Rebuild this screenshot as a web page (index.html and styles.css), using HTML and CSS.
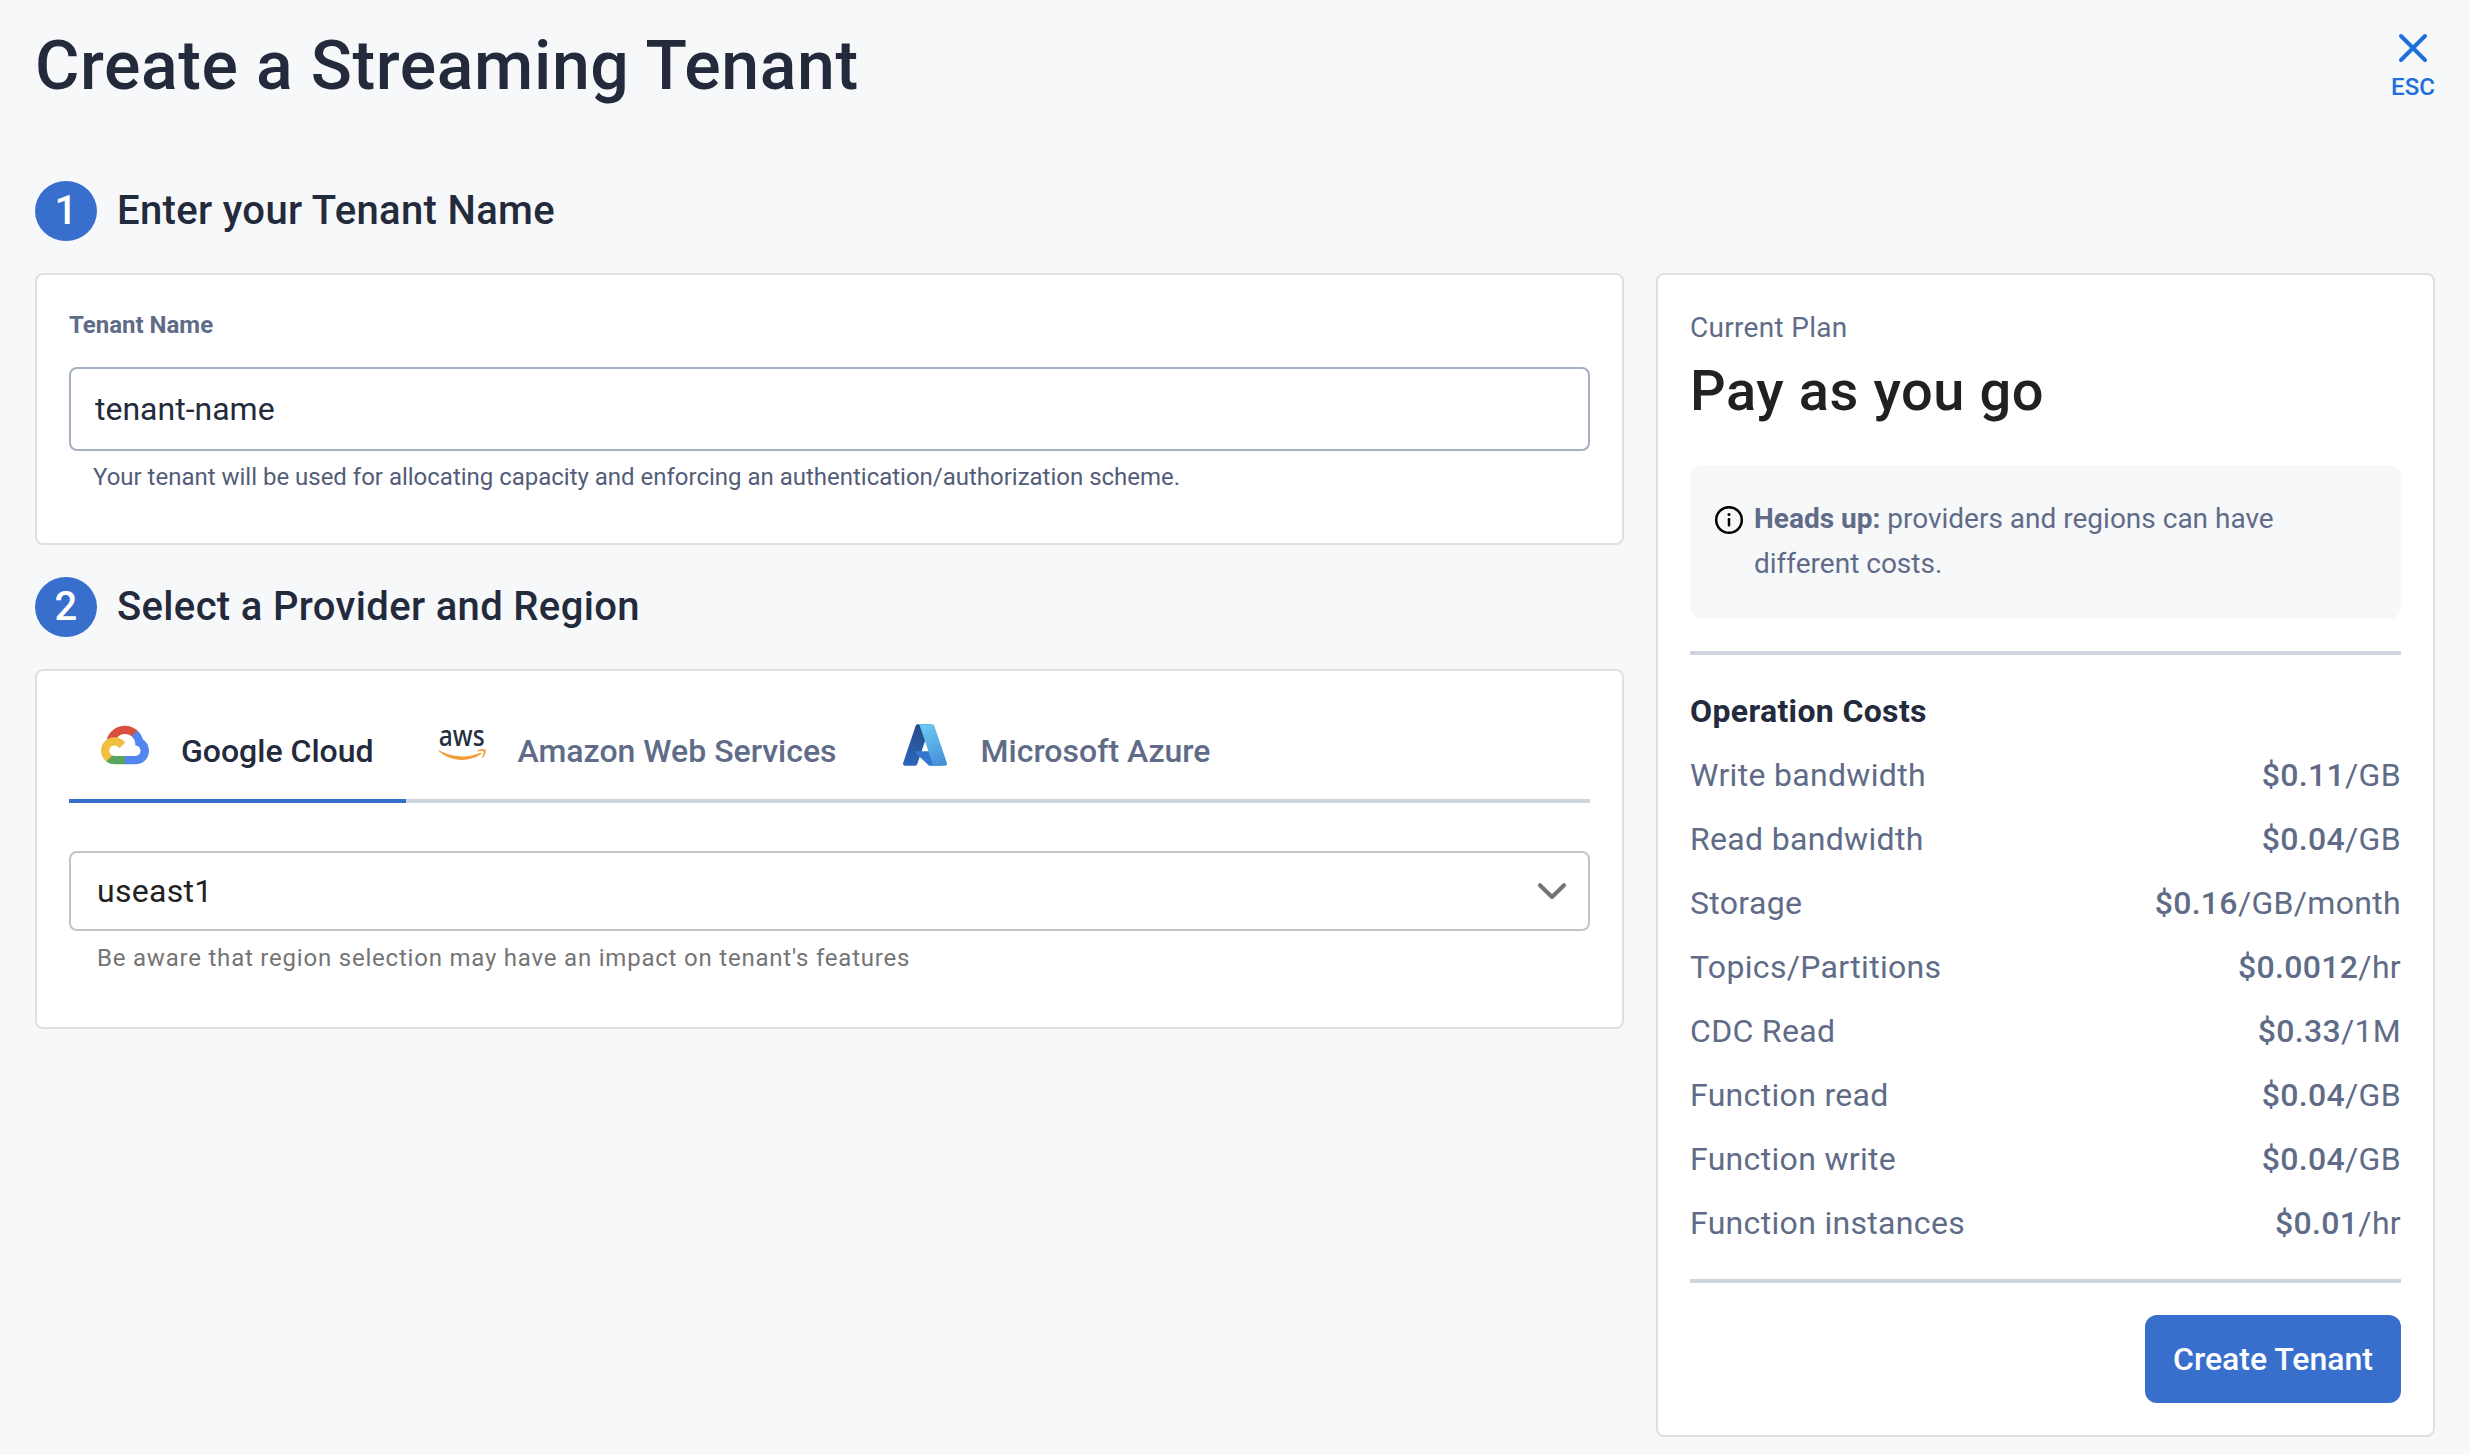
FILE: index.html
```html
<!DOCTYPE html>
<html lang="en">
<head>
<meta charset="utf-8">
<title>Create a Streaming Tenant</title>
<link rel="stylesheet" href="styles.css">
</head>
<body>
<header class="header">
  <h1 class="title">Create a Streaming Tenant</h1>
  <button class="close" type="button">
    <svg width="48" height="48" viewBox="0 0 48 48" fill="none" stroke="currentColor" stroke-width="4" stroke-linecap="round"><path d="M12 12 36 36M36 12 12 36"/></svg>
    <span>ESC</span>
  </button>
</header>

<main class="layout">
  <div class="form">
    <h2 class="step"><span class="badge">1</span>Enter your Tenant Name</h2>
    <section class="card name-card">
      <label class="label" for="tenant">Tenant Name</label>
      <input class="input" id="tenant" type="text" value="tenant-name">
      <p class="help">Your tenant will be used for allocating capacity and enforcing an authentication/authorization scheme.</p>
    </section>

    <h2 class="step"><span class="badge">2</span>Select a Provider and Region</h2>
    <section class="card region-card">
      <nav class="tabs">
        <a class="tab active">
          <svg class="logo" viewBox="0 -25 256 256">
            <path fill="#d94f3d" d="M170.2517 56.8186 192.5047 34.5656 193.9877 25.1956C153.4367-11.6774 88.9757-7.4964 52.4207 33.9196 42.2667 45.4226 34.7337 59.7636 30.7167 74.5726L38.6867 73.4496 83.1917 66.1106 86.6277 62.5966C106.4247 40.8546 139.8977 37.9296 162.7557 56.4286Z"/>
            <path fill="#5286ee" d="M224.2048 73.9182C219.0898 55.0822 208.5888 38.1492 193.9878 25.1962L162.7558 56.4282C175.9438 67.2042 183.4568 83.4382 183.1348 100.4652L183.1348 106.0092C198.4858 106.0092 210.9318 118.4542 210.9318 133.8052 210.9318 149.1572 198.4858 161.2902 183.1348 161.2902L127.4638 161.2902 121.9978 167.2242 121.9978 200.5642 127.4638 205.7952 183.1348 205.7952C223.0648 206.1062 255.6868 174.3012 255.9978 134.3712 256.1858 110.1682 244.2528 87.4782 224.2048 73.9182"/>
            <path fill="#58a55c" d="M71.8704 205.7957 127.4634 205.7957 127.4634 161.2897 71.8704 161.2897C67.9094 161.2887 64.0734 160.4377 60.4714 158.7917L52.5844 161.2117 30.1754 183.4647 28.2234 191.0387C40.7904 200.5277 56.1234 205.8637 71.8704 205.7957"/>
            <path fill="#f2be42" d="M71.8704 61.4255C31.9394 61.6635-.2366 94.2275.0014 134.1575.1344 156.4555 10.5484 177.4455 28.2234 191.0385L60.4714 158.7915C46.4804 152.4705 40.2634 136.0055 46.5844 122.0155 52.9044 108.0255 69.3704 101.8085 83.3594 108.1285 89.5244 110.9135 94.4614 115.8515 97.2464 122.0155L129.4944 89.7685C115.7734 71.8315 94.4534 61.3445 71.8704 61.4255"/>
          </svg>
          Google Cloud
        </a>
        <a class="tab">
          <svg class="logo" viewBox="0 0 48 48">
            <text class="aws-word" x="0.8" y="24.8" textLength="45.8" lengthAdjust="spacingAndGlyphs">aws</text>
            <g fill="#f29d38" transform="translate(.2 10.4) scale(.1575)">
              <path d="M273.5 143.7c-32.9 24.3-80.7 37.2-121.8 37.2-57.6 0-109.5-21.3-148.7-56.7-3.1-2.8-.3-6.6 3.4-4.4 42.4 24.6 94.7 39.5 148.8 39.5 36.5 0 76.6-7.6 113.5-23.2 5.5-2.5 10.2 3.6 4.8 7.6z"/>
              <path d="M287.2 128.1c-4.2-5.4-27.8-2.6-38.5-1.3-3.2.4-3.7-2.4-.8-4.5 18.8-13.2 49.7-9.4 53.3-5 3.6 4.5-1 35.4-18.6 50.2-2.7 2.3-5.3 1.1-4.1-1.9 4-9.9 12.9-32.2 8.7-37.5z"/>
            </g>
          </svg>
          Amazon Web Services
        </a>
        <a class="tab">
          <svg class="logo" viewBox="0 0 96 96">
            <defs>
              <linearGradient id="az-left" x1="45" y1="12" x2="18" y2="92" gradientUnits="userSpaceOnUse"><stop stop-color="#254a88"/><stop offset="1" stop-color="#2c68bb"/></linearGradient>
              <linearGradient id="az-right" x1="46" y1="10" x2="76" y2="89" gradientUnits="userSpaceOnUse"><stop stop-color="#6ac8f1"/><stop offset="1" stop-color="#4690d8"/></linearGradient>
            </defs>
            <path fill="url(#az-left)" d="M33.338 6.544h26.038l-27.03 80.087a4.152 4.152 0 0 1-3.933 2.824H8.149a4.145 4.145 0 0 1-3.928-5.47L29.404 9.368a4.152 4.152 0 0 1 3.934-2.825z"/>
            <path fill="#3375d0" d="M71.175 60.261h-41.29a1.911 1.911 0 0 0-1.305 3.309l26.532 24.764a4.171 4.171 0 0 0 2.846 1.121h23.38z"/>
            <path fill="url(#az-right)" d="M66.595 9.364a4.145 4.145 0 0 0-3.928-2.82H33.648a4.146 4.146 0 0 1 3.928 2.82l25.184 74.62a4.146 4.146 0 0 1-3.928 5.472h29.02a4.146 4.146 0 0 0 3.927-5.472z"/>
          </svg>
          Microsoft Azure
        </a>
      </nav>
      <div class="select">
        <span>useast1</span>
        <svg width="32" height="20" viewBox="0 0 32 20" fill="none" stroke="#757575" stroke-width="4.2" stroke-linecap="round" stroke-linejoin="round"><path d="M4 4.3 16 15.9 28 4.3"/></svg>
      </div>
      <p class="help region-help">Be aware that region selection may have an impact on tenant's features</p>
    </section>
  </div>

  <aside class="card plan">
    <p class="plan-label">Current Plan</p>
    <h2 class="plan-name">Pay as you go</h2>
    <div class="notice">
      <svg class="info" width="30" height="30" viewBox="0 0 30 30"><circle cx="15" cy="15" r="12.8" fill="none" stroke="#000" stroke-width="2.5"/><path d="M15 14.2v6" stroke="#000" stroke-width="2.5" stroke-linecap="round"/><circle cx="15" cy="9.6" r="1.5"/></svg>
      <p><b>Heads up:</b> providers and regions can have different costs.</p>
    </div>
    <hr class="rule">
    <h3 class="costs-title">Operation Costs</h3>
    <dl class="costs">
      <div><dt>Write bandwidth</dt><dd><b>$0.11</b>/GB</dd></div>
      <div><dt>Read bandwidth</dt><dd><b>$0.04</b>/GB</dd></div>
      <div><dt>Storage</dt><dd><b>$0.16</b>/GB/month</dd></div>
      <div><dt>Topics/Partitions</dt><dd><b>$0.0012</b>/hr</dd></div>
      <div><dt>CDC Read</dt><dd><b>$0.33</b>/1M</dd></div>
      <div><dt>Function read</dt><dd><b>$0.04</b>/GB</dd></div>
      <div><dt>Function write</dt><dd><b>$0.04</b>/GB</dd></div>
      <div><dt>Function instances</dt><dd><b>$0.01</b>/hr</dd></div>
    </dl>
    <hr class="rule">
    <button class="submit" type="button">Create Tenant</button>
  </aside>
</main>
</body>
</html>
```
FILE: styles.css
```css
* {
  box-sizing: border-box;
  margin: 0;
}

body {
  padding: 0 35px;
  background: #f7f8fa;
  color: #232a3b;
  font-family: Roboto, "Liberation Sans", sans-serif;
  font-size: 32px;
}

button {
  border: 0;
  font-family: inherit;
}

.header {
  display: flex;
  justify-content: space-between;
  height: 181px;
}

.title {
  padding-top: 26px;
  font-size: 68px;
  font-weight: 500;
  line-height: 80px;
  letter-spacing: 0.6px;
}

.close {
  display: flex;
  flex-direction: column;
  align-items: center;
  margin-right: -2px;
  padding: 24px 0 0;
  background: none;
  color: #1d6fdb;
  font-size: 24px;
  font-weight: 500;
  line-height: 30px;
}

.layout {
  display: grid;
  grid-template-columns: 1589px 779px;
  gap: 32px;
  align-items: start;
}

.step {
  display: flex;
  gap: 20px;
  height: 60px;
  margin-bottom: 32px;
  font-size: 40px;
  font-weight: 500;
  line-height: 60px;
  letter-spacing: 0.34px;
}

.badge {
  width: 62px;
  border-radius: 50%;
  background: #386fcd;
  color: #fff;
  text-align: center;
}

.card {
  border: 2px solid #dfe0e2;
  border-radius: 8px;
  background: #fff;
  padding: 32px;
}

.name-card {
  height: 272px;
  margin-bottom: 32px;
}

.region-card {
  height: 360px;
}

.label {
  display: block;
  margin-bottom: 24px;
  color: #606c87;
  font-size: 24px;
  font-weight: 700;
  line-height: 36px;
}

.input {
  display: block;
  width: 100%;
  height: 84px;
  padding: 0 24px;
  border: 2px solid #a5b0c1;
  border-radius: 8px;
  background: #fff;
  color: #232a3b;
  font: 400 32px Roboto, "Liberation Sans", sans-serif;
}

.help {
  padding: 6px 24px 0;
  color: #535d79;
  font-size: 24px;
  line-height: 40px;
  letter-spacing: -0.01px;
}

.tabs {
  display: flex;
  height: 100px;
  border-bottom: 4px solid #cfd4df;
}

.tab {
  display: flex;
  gap: 32px;
  height: 100px;
  padding: 18px 32px 0;
  color: #606c87;
  font-weight: 500;
  line-height: 60px;
}

.tab.active {
  border-bottom: 4px solid #386fcd;
  color: #232a3b;
}

.logo {
  width: 48px;
  height: 48px;
  overflow: visible;
}

.aws-word {
  fill: #252f3e;
  font: 500 29px "Noto Sans", "Open Sans", sans-serif;
}

.select {
  display: flex;
  align-items: center;
  justify-content: space-between;
  height: 80px;
  margin-top: 48px;
  padding: 0 20px 0 26px;
  border: 2px solid #c3c4c5;
  border-radius: 8px;
  color: #212121;
  letter-spacing: 0.3px;
}

.region-help {
  padding-top: 7px;
  padding-left: 28px;
  color: #757575;
  letter-spacing: 0.79px;
}

.plan {
  height: 1164px;
  margin-top: 92px;
}

.plan-label {
  padding-top: 1px;
  color: #606c87;
  font-size: 28px;
  line-height: 40px;
  letter-spacing: 0.3px;
}

.plan-name {
  margin: 11px 0 42px;
  color: #212121;
  font-size: 56px;
  font-weight: 500;
  line-height: 64px;
  letter-spacing: 0.56px;
}

.notice {
  display: flex;
  gap: 10px;
  height: 154px;
  padding: 31px 24px;
  border-radius: 12px;
  background: #f7f8fa;
  color: #606c87;
  font-size: 28px;
  line-height: 45px;
}

.notice p {
  width: 540px;
}

.info {
  margin-top: 9px;
}

.rule {
  height: 4px;
  margin: 32px 0 24px;
  border: 0;
  background: #cfd4df;
}

.costs-title {
  font-size: 32px;
  font-weight: 700;
  line-height: 64px;
  letter-spacing: 0.35px;
}

.costs div {
  display: flex;
  justify-content: space-between;
  color: #606c87;
  line-height: 64px;
  letter-spacing: 0.32px;
}

.costs b {
  font-weight: 500;
}

.costs + .rule {
  margin: 24px 0 32px;
}

.submit {
  display: block;
  width: 256px;
  height: 88px;
  margin-left: auto;
  border-radius: 12px;
  background: #386fcd;
  color: #fff;
  font-size: 32px;
  font-weight: 500;
}
```
